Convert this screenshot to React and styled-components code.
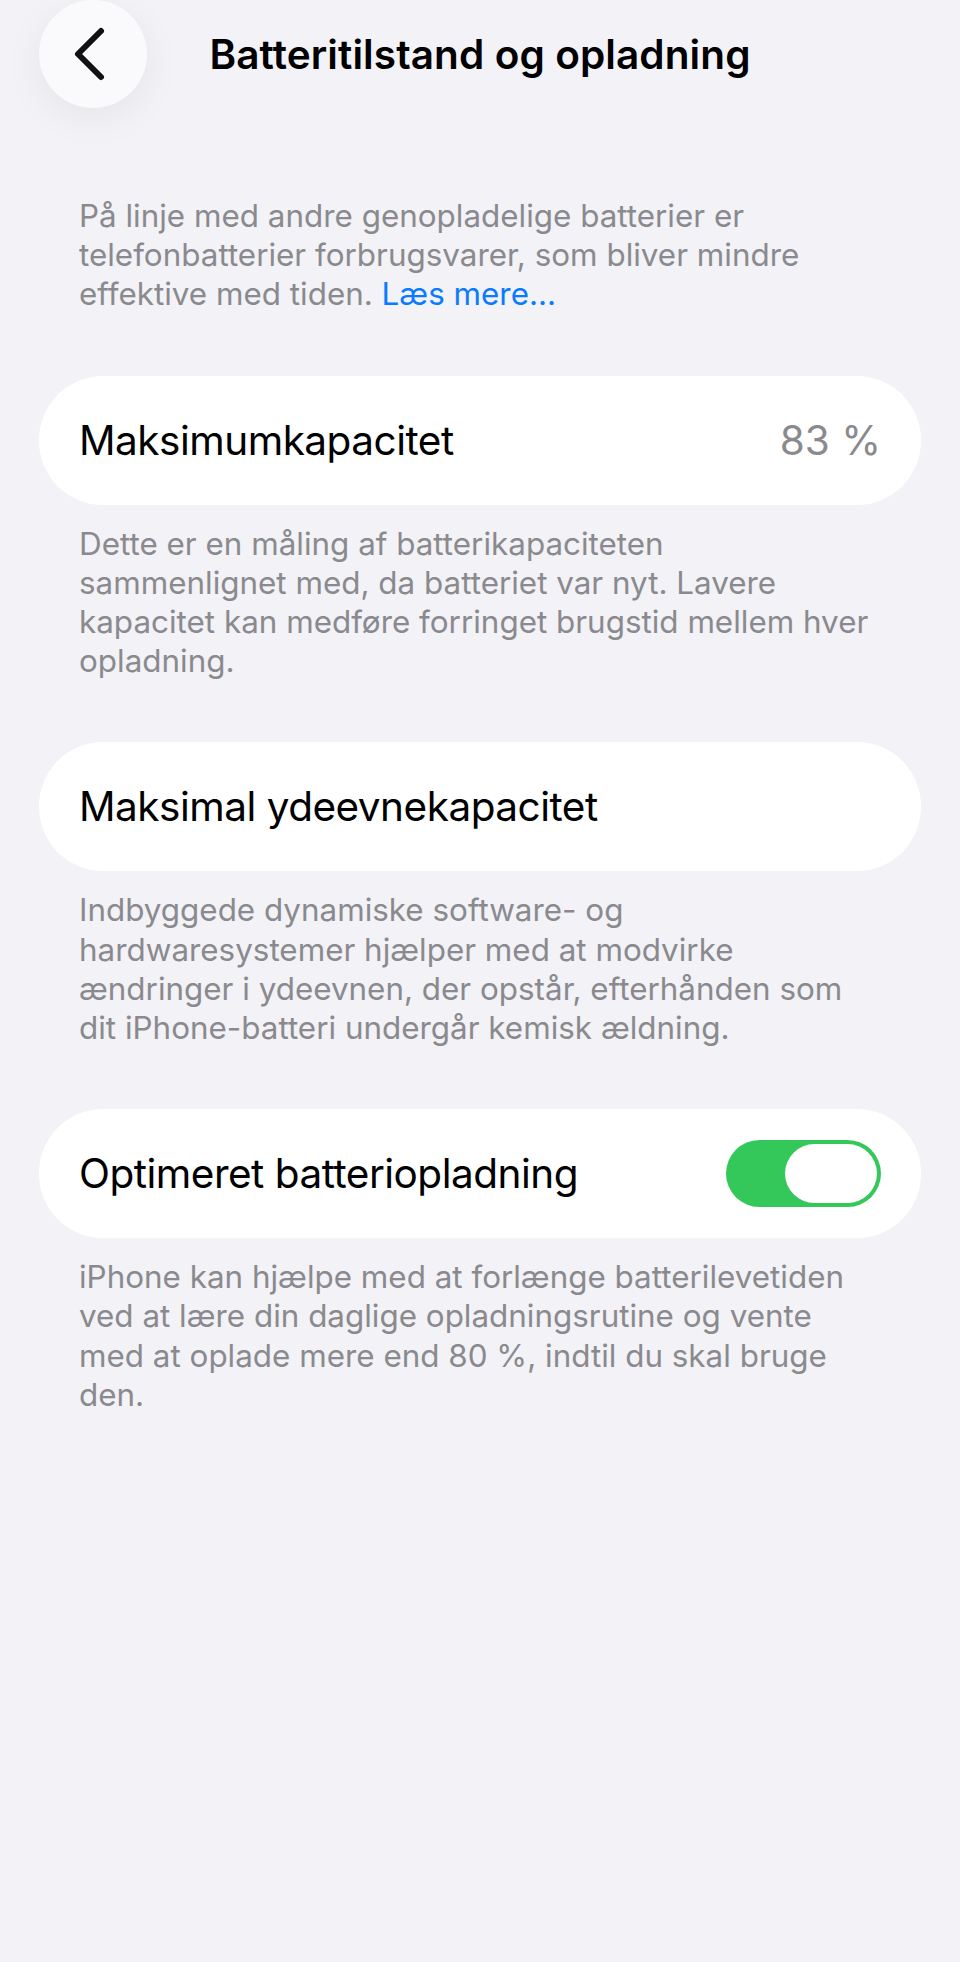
import React from 'react';
import styled, { createGlobalStyle } from 'styled-components';

const GlobalStyle = createGlobalStyle`
  html, body {
    margin: 0;
    padding: 0;
    background: #f2f2f7;
  }
  body {
    font-family: Inter, "Noto Sans", "Liberation Sans", sans-serif;
    -webkit-font-smoothing: antialiased;
  }
`;

const Page = styled.div`
  min-height: 1962px;
  background: #f2f2f7;
  overflow: hidden;
`;

const Header = styled.header`
  display: grid;
  grid-template-columns: 108px 1fr 108px;
  align-items: center;
  height: 108px;
  padding: 0 39px;
`;

const BackButton = styled.button`
  width: 108px;
  height: 108px;
  border: none;
  border-radius: 50%;
  background: #fafafc;
  box-shadow: 0 10px 40px rgba(0, 0, 0, 0.06);
  display: flex;
  align-items: center;
  justify-content: center;
  padding: 0;
  cursor: pointer;
`;

const Title = styled.h1`
  margin: 0;
  text-align: center;
  font-size: 40.5px;
  font-weight: 600;
  letter-spacing: 0.1px;
  color: #000;
  white-space: nowrap;
`;

const Content = styled.main`
  display: flex;
  flex-direction: column;
  padding: 89px 39px 0;
`;

const Section = styled.section`
  display: flex;
  flex-direction: column;
  gap: 20px;
  margin-top: ${props => (props.first ? 0 : 61)}px;
`;

const Footer = styled.p`
  margin: 0;
  padding: 0 40px;
  font-size: 31.4px;
  line-height: 39.2px;
  color: #8a8a8e;
  white-space: nowrap;
`;

const Link = styled.a`
  color: #0a7aff;
  text-decoration: none;
`;

const Card = styled.div`
  display: flex;
  align-items: center;
  justify-content: space-between;
  height: 129px;
  padding: 0 40px;
  background: #fff;
  border-radius: 64px;
`;

const Label = styled.span`
  font-size: 40.5px;
  letter-spacing: -0.5px;
  color: #000;
`;

const Value = styled.span`
  font-size: 40.5px;
  color: #8a8a8e;
`;

const Track = styled.div`
  display: flex;
  align-items: center;
  justify-content: flex-end;
  width: 155px;
  height: 67px;
  padding: 4px;
  box-sizing: border-box;
  border-radius: 34px;
  background: ${props => (props.on ? '#34c759' : '#e9e9eb')};
`;

const Knob = styled.div`
  width: 92px;
  height: 59px;
  border-radius: 30px;
  background: #fff;
`;

const Chevron = () => (
  <svg width="40" height="56" viewBox="0 0 40 56">
    <path
      d="M28 5 L5 28 L28 51"
      fill="none"
      stroke="#111"
      strokeWidth="6"
      strokeLinecap="round"
      strokeLinejoin="round"
    />
  </svg>
);

const lines = arr =>
  arr.map((l, i) => (
    <React.Fragment key={i}>
      {l}
      {i < arr.length - 1 && <br />}
    </React.Fragment>
  ));

export default function App() {
  return (
    <Page>
      <GlobalStyle />
      <Header>
        <BackButton aria-label="Tilbage">
          <Chevron />
        </BackButton>
        <Title>Batteritilstand og opladning</Title>
        <span />
      </Header>
      <Content>
        <Section first>
          <Footer>
            På linje med andre genopladelige batterier er
            <br />
            telefonbatterier forbrugsvarer, som bliver mindre
            <br />
            effektive med tiden. <Link href="#">Læs mere...</Link>
          </Footer>
        </Section>
        <Section>
          <Card>
            <Label>Maksimumkapacitet</Label>
            <Value>83 %</Value>
          </Card>
          <Footer>
            {lines([
              'Dette er en måling af batterikapaciteten',
              'sammenlignet med, da batteriet var nyt. Lavere',
              'kapacitet kan medføre forringet brugstid mellem hver',
              'opladning.',
            ])}
          </Footer>
        </Section>
        <Section>
          <Card>
            <Label>Maksimal ydeevnekapacitet</Label>
          </Card>
          <Footer>
            {lines([
              'Indbyggede dynamiske software- og',
              'hardwaresystemer hjælper med at modvirke',
              'ændringer i ydeevnen, der opstår, efterhånden som',
              'dit iPhone-batteri undergår kemisk ældning.',
            ])}
          </Footer>
        </Section>
        <Section>
          <Card>
            <Label>Optimeret batteriopladning</Label>
            <Track on>
              <Knob />
            </Track>
          </Card>
          <Footer>
            {lines([
              'iPhone kan hjælpe med at forlænge batterilevetiden',
              'ved at lære din daglige opladningsrutine og vente',
              'med at oplade mere end 80 %, indtil du skal bruge',
              'den.',
            ])}
          </Footer>
        </Section>
      </Content>
    </Page>
  );
}
